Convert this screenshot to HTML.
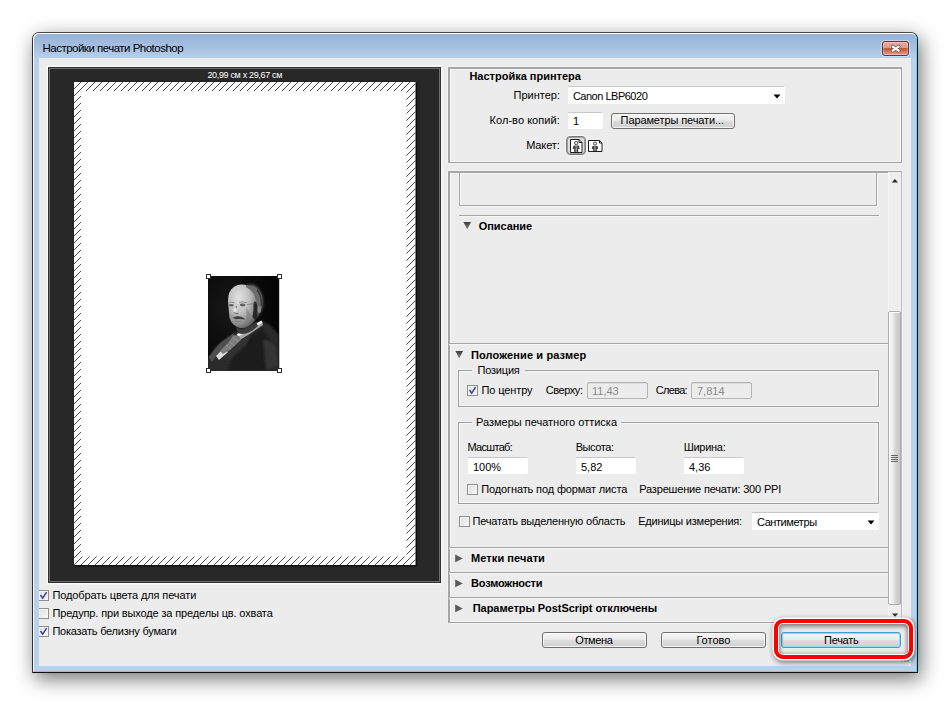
<!DOCTYPE html>
<html lang="ru">
<head>
<meta charset="utf-8">
<title>Настройки печати Photoshop</title>
<style>
html,body{margin:0;padding:0;}
body{width:950px;height:705px;background:#fff;position:relative;overflow:hidden;
  font-family:"Liberation Sans",sans-serif;font-size:11px;color:#000;}
*{box-sizing:border-box;}
.abs{position:absolute;}
.t{position:absolute;white-space:nowrap;line-height:14px;height:14px;}
.b{font-weight:bold;}
#win{position:absolute;left:32px;top:32px;width:886px;height:641px;border-radius:7px 7px 1px 1px;
  background:#b9d1ea;border:1px solid #111;border-top-color:#484848;border-left-color:#2e2e2e;
  box-shadow:3px 6px 20px rgba(0,0,0,.55);}
#win:before{content:"";position:absolute;left:0;top:0;right:0;bottom:0;border-radius:6px 6px 0 0;
  border:1px solid #fbfdff;border-right-color:#5bd5f6;border-bottom-color:#5bd5f6;z-index:2;}
#titlebar{position:absolute;left:1px;top:1px;right:1px;height:24px;border-radius:5px 5px 0 0;
  background:linear-gradient(#97b3d7 0,#a2bcde 40%,#b6cfea 100%);}
#client{position:absolute;left:39px;top:58px;width:872px;height:608px;background:#ececec;}
.inp{position:absolute;background:#fff;border:1px solid #fff;border-top-color:#c9c9c9;border-left-color:#ebebeb;border-radius:2px;}
.dis{position:absolute;background:#ececec;border:1px solid #b4b4b4;border-radius:2px;box-shadow:inset 0 1px 0 #dcdcdc;}
.btn{position:absolute;border:1px solid #707070;border-radius:3px;
  background:linear-gradient(#f4f4f4 0,#ececec 45%,#dddddd 50%,#cfcfcf 100%);box-shadow:inset 0 0 0 1px rgba(255,255,255,.75);}
.cb{position:absolute;width:11px;height:11px;border:1px solid #8e8f8f;background:linear-gradient(135deg,#dedede,#f8f8f8);
  box-shadow:inset 0 0 0 1px #f4f4f4;}
.hl{position:absolute;height:1px;background:#a4a4a4;box-shadow:0 1px 0 #f5f5f5;}
.grp{position:absolute;border:1px solid #9e9e9e;box-shadow:inset 0 0 0 1px #f7f7f7, 0 0 0 1px rgba(255,255,255,.4);}
.grp.big{border-top-width:2px;border-left-width:2px;border-top-color:#a6a6a6;border-left-color:#a6a6a6;}
</style>
</head>
<body>
<div id="win">
  <div id="titlebar"></div>
</div>
<div class="t" id="title" style="left:42.5px;top:41px;font-size:11.5px;letter-spacing:-0.51px;">Настройки печати Photoshop</div>
<div id="client"></div>
<!-- close button -->
<div class="abs" id="closebtn" style="left:882px;top:41px;width:27px;height:15px;border-radius:3px;border:1px solid #603646;
  background:linear-gradient(#eaa99a 0,#e39a8a 42%,#c05c36 50%,#c4603e 62%,#d37963 72%,#dc8c78 88%,#e8a696 100%);box-shadow:inset 0 0 0 1px rgba(255,255,255,.3), 0 0 0 1px rgba(235,245,255,.45);">
  <svg class="abs" style="left:6px;top:0px" width="14" height="13" viewBox="0 0 14 13"><path d="M3.6 4.5 L9.8 8.7 M9.8 4.5 L3.6 8.7" stroke="#5c5058" stroke-width="3.6" stroke-linecap="round" opacity=".8"/><path d="M3.7 4.6 L9.7 8.6 M9.7 4.6 L3.7 8.6" stroke="#fff" stroke-width="2.1" stroke-linecap="round"/></svg>
</div>

<!-- preview -->
<div class="abs" id="pv" style="left:48px;top:67px;width:393px;height:516px;background:#282828;border:1px solid #303030;box-shadow:inset 0 0 0 1px #6c6c6c, 0 0 0 1.5px #f8f8f8;"></div>
<div class="t" id="pvlabel" style="left:207.4px;top:69px;font-size:9px;color:#fff;line-height:12px;height:12px;letter-spacing:-0.33px;">20,99 см x 29,67 см</div>
<div class="abs" style="left:75px;top:83px;width:341.5px;height:483px;background:#101010;box-shadow:0 0 2px #0c0c0c;"></div>
<svg class="abs" id="paper" style="left:74px;top:82px" width="341.5" height="483" viewBox="0 0 341.5 483">
  <defs>
    <linearGradient id="trig" x1="0" y1="0" x2="0" y2="1"><stop offset="0" stop-color="#3c3c3c"/><stop offset="1" stop-color="#8a8a8a"/></linearGradient>
    <clipPath id="pclip"><rect width="341.5" height="483"/></clipPath>
  </defs>
  <rect width="341.5" height="483" fill="#fff"/>
  <path clip-path="url(#pclip)" d="M-1 8L8 -1M-1 15L15 -1M-1 22L22 -1M-1 29L29 -1M-1 36L36 -1M-1 43L43 -1M-1 50L50 -1M-1 57L57 -1M-1 64L64 -1M-1 71L71 -1M-1 78L78 -1M-1 85L85 -1M-1 92L92 -1M-1 99L99 -1M-1 106L106 -1M-1 113L113 -1M-1 120L120 -1M-1 127L127 -1M-1 134L134 -1M-1 141L141 -1M-1 148L148 -1M-1 155L155 -1M-1 162L162 -1M-1 169L169 -1M-1 176L176 -1M-1 183L183 -1M-1 190L190 -1M-1 197L197 -1M-1 204L204 -1M-1 211L211 -1M-1 218L218 -1M-1 225L225 -1M-1 232L232 -1M-1 239L239 -1M-1 246L246 -1M-1 253L253 -1M-1 260L260 -1M-1 267L267 -1M-1 274L274 -1M-1 281L281 -1M-1 288L288 -1M-1 295L295 -1M-1 302L302 -1M-1 309L309 -1M-1 316L316 -1M-1 323L323 -1M-1 330L330 -1M-1 337L337 -1M-1 344L344 -1M-1 351L351 -1M-1 358L358 -1M-1 365L365 -1M-1 372L372 -1M-1 379L379 -1M-1 386L386 -1M-1 393L393 -1M-1 400L400 -1M-1 407L407 -1M-1 414L414 -1M-1 421L421 -1M-1 428L428 -1M-1 435L435 -1M-1 442L442 -1M-1 449L449 -1M-1 456L456 -1M-1 463L463 -1M-1 470L470 -1M-1 477L477 -1M-1 484L484 -1M-1 491L491 -1M-1 498L498 -1M-1 505L505 -1M-1 512L512 -1M-1 519L519 -1M-1 526L526 -1M-1 533L533 -1M-1 540L540 -1M-1 547L547 -1M-1 554L554 -1M-1 561L561 -1M-1 568L568 -1M-1 575L575 -1M-1 582L582 -1M-1 589L589 -1M-1 596L596 -1M-1 603L603 -1M-1 610L610 -1M-1 617L617 -1M-1 624L624 -1M-1 631L631 -1M-1 638L638 -1M-1 645L645 -1M-1 652L652 -1M-1 659L659 -1M-1 666L666 -1M-1 673L673 -1M-1 680L680 -1M-1 687L687 -1M-1 694L694 -1M-1 701L701 -1M-1 708L708 -1M-1 715L715 -1M-1 722L722 -1M-1 729L729 -1M-1 736L736 -1M-1 743L743 -1M-1 750L750 -1M-1 757L757 -1M-1 764L764 -1M-1 771L771 -1M-1 778L778 -1M-1 785L785 -1M-1 792L792 -1M-1 799L799 -1M-1 806L806 -1M-1 813L813 -1M-1 820L820 -1M-1 827L827 -1" stroke="#2c2c2c" stroke-width="0.85" fill="none"/>
  <rect x="7" y="9" width="325.5" height="465.5" fill="#fff"/>
</svg>



<!-- photo -->
<svg class="abs" id="photo" style="left:204px;top:272px" width="80" height="104" viewBox="204 272 80 104">
  <defs>
    <filter id="bl1" x="-30%" y="-30%" width="160%" height="160%"><feGaussianBlur stdDeviation="1.3"/></filter>
    <filter id="bl2" x="-30%" y="-30%" width="160%" height="160%"><feGaussianBlur stdDeviation="0.7"/></filter>
    <filter id="bl3" x="-30%" y="-30%" width="160%" height="160%"><feGaussianBlur stdDeviation="0.45"/></filter>
    <clipPath id="pc"><rect x="208" y="276" width="71.2" height="94.8"/></clipPath>
    <radialGradient id="faceg" cx="0.38" cy="0.3" r="0.75"><stop offset="0" stop-color="#e2e2e2"/><stop offset=".45" stop-color="#c2c2c2"/><stop offset=".8" stop-color="#8e8e8e"/><stop offset="1" stop-color="#5a5a5a"/></radialGradient>
    <radialGradient id="bgg" cx="0.3" cy="0.35" r="0.6"><stop offset="0" stop-color="#181818"/><stop offset="1" stop-color="#060606"/></radialGradient>
  </defs>
  <rect x="208" y="276" width="71.2" height="94.8" fill="url(#bgg)"/>
  <g clip-path="url(#pc)">
    <!-- suit body -->
    <path d="M207 359 L214 348 L226 338 L236 331 L250 324 L262 321 L270 325 L279 335 V372 H207 Z" fill="#2b2b2b" filter="url(#bl1)"/>
    <path d="M236 348 L262 328 L274 346 L272 372 H228 Z" fill="#1a1a1a" filter="url(#bl1)"/>
    <path d="M263 340 Q272 338 277 350 L278 366 L266 371 Z" fill="#353535" filter="url(#bl1)"/>
    <!-- left lapel (lighter) -->
    <path d="M209 357 L219 344 L234 333 L229 343 L217 355 L212 362 Z" fill="#505050" filter="url(#bl2)"/>
    <path d="M222 357 L240 340 L252 332 L246 345 L230 360 Z" fill="#333" filter="url(#bl1)"/>
    <!-- shirt -->
    <path d="M216 356 L224 348 L228 352 L219 360 Z" fill="#dcdcdc" filter="url(#bl3)"/>
    <path d="M234 337 L246 331 L262 321.5 L263 325 L248 335 L238 341 Z" fill="#a8a8a8" filter="url(#bl2)"/>
    <!-- collar -->
    <path d="M236.5 334.2 L261.5 320.6 L262.6 322.6 L238.5 336.6 Z" fill="#f2f2f2" filter="url(#bl3)"/>
    <!-- tie -->
    <path d="M233 335 L239 336 L241 340 L230 350 L223 354 L220 351 L229 342 Z" fill="#7c7c7c" filter="url(#bl3)"/>
    <path d="M226 345 L231 349 M229.5 341.5 L234.5 345.5 M233 338 L238 341" stroke="#9c9c9c" stroke-width=".8" filter="url(#bl2)"/>
    <!-- neck shadow -->
    <path d="M236 327 Q244 333 256 322 L258 326 Q246 337 238 333 Z" fill="#3a3a3a" filter="url(#bl2)"/>
    <!-- hair back -->
    <ellipse cx="251" cy="302" rx="12" ry="17.5" fill="#5c5c5c" filter="url(#bl1)"/>
    <!-- head -->
    <path d="M228 302 Q227.5 286 241 284.5 Q254 284 256.5 300 Q258 312 254.5 321 Q248 329 240 328 Q232 326 229.5 318 Z" fill="url(#faceg)" filter="url(#bl2)"/>
    <!-- hair top-right -->
    <path d="M246 285 Q258 285 262 297 Q263 306 260 311 L256 304 Q256 292 246 287 Z" fill="#6c6c6c" filter="url(#bl2)"/>
    <path d="M257 290 Q262 296 261.5 306" stroke="#3a3a3a" stroke-width="1.6" fill="none" filter="url(#bl2)"/>
    <!-- sideburn + ear -->
    <path d="M255 301 Q258 304 257.5 312 L256 321 L252.5 317 Q254 309 253.5 303 Z" fill="#262626" filter="url(#bl2)"/>
    <ellipse cx="259.2" cy="309.5" rx="1.7" ry="3.6" fill="#8a8a8a" filter="url(#bl3)"/>
    <!-- brow/eye shadows, glasses -->
    <ellipse cx="231.4" cy="305.2" rx="2.4" ry="1.3" fill="#626262" filter="url(#bl2)"/><ellipse cx="242.6" cy="305" rx="2.9" ry="1.4" fill="#646464" filter="url(#bl2)"/>
    <path d="M228.6 302.6 Q231.4 301.6 234.4 302.8 M239 302.4 Q243 301.2 247 302.8" stroke="#8a8a8a" stroke-width=".9" fill="none" filter="url(#bl3)"/>
    <path d="M247 304.5 L255 303.5" stroke="#666" stroke-width=".6"/>
    <!-- nose -->
    <path d="M236.6 306 L234.4 312.6 Q236 314.2 238.6 313.2" stroke="#7c7c7c" stroke-width="1.1" fill="none" filter="url(#bl3)"/>
    <ellipse cx="235" cy="310" rx="1.5" ry="2.4" fill="#e6e6e6" filter="url(#bl3)"/>
    <!-- moustache & mouth -->
    <path d="M232.5 317.8 Q236.5 315.4 240 316.6 Q243 317 245.5 319.6 Q240 318.6 236 319.2 Z" fill="#3c3c3c" filter="url(#bl3)"/>
    <path d="M234.5 321 Q238 322 241.5 321" stroke="#777" stroke-width=".8" fill="none" filter="url(#bl3)"/>
    <!-- cheek shade -->
    <path d="M246 308 Q252 312 250 322 Q246 327 242 327 Q248 320 246 308 Z" fill="#7a7a7a" opacity=".55" filter="url(#bl2)"/>
  </g>
  <g fill="#fff" stroke="#2a2a2a" stroke-width="1">
    <rect x="206.5" y="274.5" width="4" height="4"/><rect x="277.5" y="274.5" width="4" height="4"/>
    <rect x="206.5" y="368.5" width="4" height="4"/><rect x="277.5" y="368.5" width="4" height="4"/>
  </g>
</svg>

<!-- printer group -->
<div class="grp big" style="left:448px;top:67px;width:454px;height:96px;"></div>
<div class="t b" style="left:469.4px;top:69px;">Настройка принтера</div>
<div class="t" style="left:500px;top:88px;width:60px;text-align:right;">Принтер:</div>
<div class="inp" style="left:567px;top:86px;width:218px;height:18px;"></div>
<div class="t" style="left:572.9px;top:89px;letter-spacing:-0.49px;">Canon LBP6020</div>
<svg class="abs" style="left:773px;top:94px" width="8" height="5" viewBox="0 0 8 5"><path d="M0.5 0.5 H7.5 L4 4.5 Z" fill="#000"/></svg>
<div class="t" style="left:489.6px;top:113px;letter-spacing:0.04px;">Кол-во копий:</div>
<div class="inp" style="left:567px;top:112px;width:35.5px;height:16.5px;"></div>
<div class="t" style="left:573px;top:114px;">1</div>
<div class="btn" style="left:611px;top:113px;width:124px;height:16px;"></div>
<div class="t" style="left:620.6px;top:113px;letter-spacing:-0.11px;">Параметры печати...</div>
<div class="t" style="left:526.2px;top:138px;letter-spacing:-0.11px;">Макет:</div>
<!-- layout icons -->
<div class="abs" style="left:566px;top:136px;width:20px;height:19px;border:1px solid #787878;border-radius:4px;background:#dedede;box-shadow:inset 0 0 0 1px #a2a2a2, 0 0 0 1px #f7f7f7;"></div>
<svg class="abs" style="left:570px;top:139px" width="13" height="14" viewBox="0 0 13 14">
  <path d="M0.5 0.5 H9 L12 3.5 V13.5 H0.5 Z" fill="#fff" stroke="#1e1e1e" stroke-width="1"/>
  <path d="M9 0.5 V3.5 H12" fill="none" stroke="#1e1e1e" stroke-width="1"/>
  <circle cx="6.2" cy="4" r="1.7" fill="#e4e4e4" stroke="#444" stroke-width=".9"/>
  <path d="M3.2 7.4 Q3.2 6.6 4.2 6.6 H8.2 Q9.2 6.6 9.2 7.4 L9.6 10 H8.2 V13 H4.2 V10 H2.8 Z" fill="#464646"/>
  <path d="M6.2 7 V13" stroke="#b8b8b8" stroke-width="1"/>
</svg>
<svg class="abs" style="left:588px;top:140px" width="15" height="12" viewBox="0 0 15 12">
  <path d="M0.5 0.5 H11.5 L14 3 V11.5 H0.5 Z" fill="#fff" stroke="#1e1e1e" stroke-width="1"/>
  <path d="M11.5 0.5 V3 H14" fill="none" stroke="#1e1e1e" stroke-width="1"/>
  <circle cx="7" cy="3.6" r="1.6" fill="#e4e4e4" stroke="#444" stroke-width=".9"/>
  <path d="M4.2 6.6 Q4.2 5.9 5.1 5.9 H8.9 Q9.8 5.9 9.8 6.6 L10.2 9 H8.9 V11 H5.1 V9 H3.8 Z" fill="#464646"/>
  <path d="M7 6.2 V11" stroke="#b8b8b8" stroke-width="1"/>
</svg>

<!-- scroll area -->
<div class="grp big" id="scr" style="left:448px;top:171px;width:454px;height:452px;border-right-color:#bdbdbd;"></div>
<!-- partially visible box at top -->
<div class="abs" style="left:459px;top:174px;width:418px;height:32px;border:1px solid #a6a6a6;border-top:none;box-shadow:inset 1px 0 0 #f8f8f8, 1px 1px 0 #f8f8f8, -1px 0 0 #f4f4f4;"></div>
<div class="abs" style="left:459px;top:173px;width:1px;height:1px;background:#a6a6a6;"></div><div class="abs" style="left:876px;top:173px;width:1px;height:1px;background:#a6a6a6;"></div>
<div class="hl" style="left:459px;top:215px;width:420px;"></div>
<svg class="abs" style="left:463px;top:222px" width="9" height="8" viewBox="0 0 9 8"><path d="M0.4 0 H8 L4.2 7.6 Z" fill="url(#trig)"/></svg>
<div class="t b" style="left:478.8px;top:219px;letter-spacing:-0.09px;">Описание</div>

<div class="hl" style="left:449px;top:343px;width:439px;"></div>
<svg class="abs" style="left:455px;top:351px" width="9" height="8" viewBox="0 0 9 8"><path d="M0.4 0 H8 L4.2 7.6 Z" fill="url(#trig)"/></svg>
<div class="t b" style="left:470.9px;top:348px;letter-spacing:0.13px;">Положение и размер</div>

<!-- fieldset: position -->
<div class="grp" style="left:458px;top:370px;width:421px;height:37px;"></div>
<div class="abs" style="left:472px;top:368px;width:53px;height:5px;background:#ececec;"></div>
<div class="t" style="left:477.5px;top:363px;letter-spacing:-0.20px;">Позиция</div>
<div class="cb" style="left:467px;top:385px;"></div>
<svg class="abs ck" style="left:468px;top:386px" width="9" height="9" viewBox="0 0 9 9"><path d="M1.5 4 L3.7 7.2 L7.6 1.2" fill="none" stroke="#36409a" stroke-width="1.45"/></svg>
<div class="t" style="left:481.5px;top:383px;letter-spacing:-0.12px;">По центру</div>
<div class="t" style="left:545.7px;top:383px;letter-spacing:-0.43px;">Сверху:</div>
<div class="dis" style="left:587px;top:382px;width:61px;height:17px;"></div>
<div class="t" style="left:592px;top:384px;color:#8a8a8a;">11,43</div>
<div class="t" style="left:655.8px;top:383px;letter-spacing:-0.70px;">Слева:</div>
<div class="dis" style="left:691px;top:382px;width:61px;height:17px;"></div>
<div class="t" style="left:697px;top:384px;color:#8a8a8a;">7,814</div>

<!-- fieldset: print size -->
<div class="grp" style="left:458px;top:422px;width:421px;height:82px;"></div>
<div class="abs" style="left:472px;top:420px;width:149px;height:5px;background:#ececec;"></div>
<div class="t" style="left:476.0px;top:415px;">Размеры печатного оттиска</div>
<div class="t" style="left:467.5px;top:440px;letter-spacing:-0.70px;">Масштаб:</div>
<div class="t" style="left:575.7px;top:440px;letter-spacing:-0.42px;">Высота:</div>
<div class="t" style="left:683.7px;top:440px;letter-spacing:-0.29px;">Ширина:</div>
<div class="inp" style="left:467px;top:457px;width:61px;height:17px;"></div>
<div class="inp" style="left:575px;top:457px;width:61px;height:17px;"></div>
<div class="inp" style="left:683px;top:457px;width:61px;height:17px;"></div>
<div class="t" style="left:473px;top:460px;">100%</div>
<div class="t" style="left:581px;top:460px;">5,82</div>
<div class="t" style="left:689px;top:460px;">4,36</div>
<div class="cb" style="left:467px;top:484px;"></div>
<div class="t" style="left:481.3px;top:482px;letter-spacing:-0.13px;">Подогнать под формат листа</div>
<div class="t" style="left:639.2px;top:482px;letter-spacing:-0.17px;">Разрешение печати: 300 PPI</div>

<div class="cb" style="left:459px;top:516px;"></div>
<div class="t" style="left:472.5px;top:514px;letter-spacing:-0.19px;">Печатать выделенную область</div>
<div class="t" style="left:638.2px;top:514px;letter-spacing:-0.22px;">Единицы измерения:</div>
<div class="inp" style="left:751px;top:512px;width:128px;height:18px;"></div>
<div class="t" style="left:757.0px;top:515px;letter-spacing:-0.42px;">Сантиметры</div>
<svg class="abs" style="left:867px;top:520px" width="8" height="5" viewBox="0 0 8 5"><path d="M0.5 0.5 H7.5 L4 4.5 Z" fill="#000"/></svg>

<div class="hl" style="left:449px;top:547px;width:439px;"></div>
<svg class="abs" style="left:455px;top:554px" width="8" height="9" viewBox="0 0 8 9"><path d="M0.2 0.6 V8.2 L7.8 4.4 Z" fill="#5a5a5a"/></svg>
<div class="t b" style="left:471.1px;top:551px;letter-spacing:0.07px;">Метки печати</div>
<div class="hl" style="left:449px;top:572px;width:439px;"></div>
<svg class="abs" style="left:455px;top:579px" width="8" height="9" viewBox="0 0 8 9"><path d="M0.2 0.6 V8.2 L7.8 4.4 Z" fill="#5a5a5a"/></svg>
<div class="t b" style="left:471.1px;top:576px;letter-spacing:-0.21px;">Возможности</div>
<div class="hl" style="left:449px;top:597px;width:439px;"></div>
<svg class="abs" style="left:455px;top:604px" width="8" height="9" viewBox="0 0 8 9"><path d="M0.2 0.6 V8.2 L7.8 4.4 Z" fill="#5a5a5a"/></svg>
<div class="t b" style="left:472.7px;top:601px;letter-spacing:-0.04px;">Параметры PostScript отключены</div>

<!-- scrollbar -->
<div class="abs" id="sbtrack" style="left:888px;top:172px;width:13px;height:450px;background:#efefef;border-left:1px solid #f6f6f6;"></div>
<svg class="abs" style="left:891px;top:178px" width="8" height="5" viewBox="0 0 8 5"><path d="M0.8 4.4 L3.9 0.9 L7 4.4 Z" fill="#2a2a2a"/></svg>
<div class="abs" id="sbthumb" style="left:888px;top:311px;width:13px;height:294px;border:1px solid #adadad;border-radius:2px;background:linear-gradient(90deg,#f8f8f8 0,#eeeeee 35%,#d8d8d8 55%,#c6c6c6 100%);box-shadow:inset 1px 1px 0 #fff;"></div>
<div class="abs" style="left:891px;top:455px;width:7px;height:1px;background:#666;box-shadow:0 2px 0 #666,0 4px 0 #666,0 6px 0 #666;"></div>
<svg class="abs" style="left:891px;top:613px" width="8" height="5" viewBox="0 0 8 5"><path d="M1 0.6 H7.2 L4.1 3.8 Z" fill="#333"/></svg>

<!-- bottom buttons -->
<div class="btn" style="left:542px;top:632px;width:105px;height:16px;"></div>
<div class="t" style="left:575.2px;top:633px;letter-spacing:-0.34px;">Отмена</div>
<div class="btn" style="left:661px;top:632px;width:105px;height:16px;"></div>
<div class="t" style="left:696.4px;top:633px;">Готово</div>
<div class="btn" id="printbtn" style="left:781px;top:632px;width:120px;height:16px;border-color:#3c9fd6;box-shadow:inset 0 0 0 1px #8fd8f5;"></div>
<div class="t" style="left:824.1px;top:633px;letter-spacing:-0.29px;">Печать</div>

<!-- left checkboxes -->
<div class="cb" style="left:38px;top:590px;"></div>
<svg class="abs ck" style="left:39px;top:591px" width="9" height="9" viewBox="0 0 9 9"><path d="M1.5 4 L3.7 7.2 L7.6 1.2" fill="none" stroke="#36409a" stroke-width="1.45"/></svg>
<div class="t" style="left:52.4px;top:588px;letter-spacing:-0.11px;">Подобрать цвета для печати</div>
<div class="cb" style="left:38px;top:608px;"></div>
<div class="t" style="left:52.4px;top:606px;letter-spacing:-0.14px;">Предупр. при выходе за пределы цв. охвата</div>
<div class="cb" style="left:38px;top:626px;"></div>
<svg class="abs ck" style="left:39px;top:627px" width="9" height="9" viewBox="0 0 9 9"><path d="M1.5 4 L3.7 7.2 L7.6 1.2" fill="none" stroke="#36409a" stroke-width="1.45"/></svg>
<div class="t" style="left:52.4px;top:624px;letter-spacing:-0.23px;">Показать белизну бумаги</div>

<div class="abs" style="left:34px;top:580px;width:5px;height:70px;background:#b9d1ea;"></div>
<!-- resize grip -->
<div class="abs" style="left:901px;top:657px;width:2px;height:2px;background:#b8b8b8;box-shadow:3px 0 0 #b8b8b8,6px 0 0 #b8b8b8,3px -3px 0 #b8b8b8,6px -3px 0 #b8b8b8,6px -6px 0 #b8b8b8, 0 3px 0 #b8b8b8,3px 3px 0 #b8b8b8,6px 3px 0 #b8b8b8;"></div>

<!-- red highlight -->
<div class="abs" id="hl" style="left:774px;top:619px;width:139px;height:39.5px;border:4.5px solid #ff0000;border-radius:9px;
  box-shadow:0 0 0 1.5px #fff, 1px 2px 5px 2px rgba(0,0,0,.45), inset 0 0 0 1px #fff, inset 0 1.5px 4px 2px rgba(0,0,0,.48);"></div>
</body>
</html>
